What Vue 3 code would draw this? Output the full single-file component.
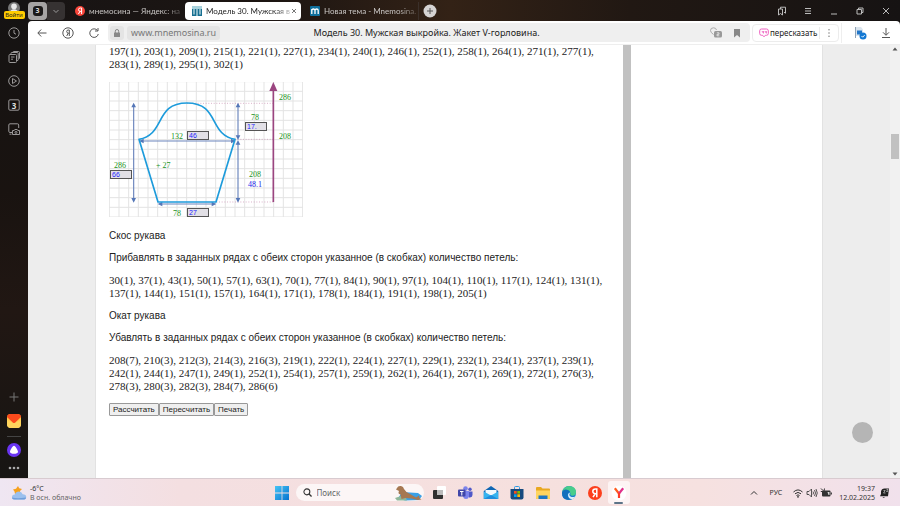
<script setup>
const topRows = '197(1), 203(1), 209(1), 215(1), 221(1), 227(1), 234(1), 240(1), 246(1), 252(1), 258(1), 264(1), 271(1), 277(1), 283(1), 289(1), 295(1), 302(1)'
const bevelRows = '30(1), 37(1), 43(1), 50(1), 57(1), 63(1), 70(1), 77(1), 84(1), 90(1), 97(1), 104(1), 110(1), 117(1), 124(1), 131(1), 137(1), 144(1), 151(1), 157(1), 164(1), 171(1), 178(1), 184(1), 191(1), 198(1), 205(1)'
const capRows = '208(7), 210(3), 212(3), 214(3), 216(3), 219(1), 222(1), 224(1), 227(1), 229(1), 232(1), 234(1), 237(1), 239(1), 242(1), 244(1), 247(1), 249(1), 252(1), 254(1), 257(1), 259(1), 262(1), 264(1), 267(1), 269(1), 272(1), 276(3), 278(3), 280(3), 282(3), 284(7), 286(6)'
const columns = Array.from({ length: 21 }, (_, i) => i * 29 + 1)
const lines = Array.from({ length: 15 }, (_, i) => i * 29 - 1)
</script>

<template>
  <div class="desktop">
    <div class="browser">
      <nav class="rail" aria-label="Боковая панель">
        <button class="login" aria-label="Профиль">
          <svg class="avatar" viewBox="0 0 12 12"><circle cx="6" cy="6" r="6" fill="#777" /><circle cx="6" cy="4.4" r="2.8" fill="#e8e8e8" /><path d="M1.6 11c.6-5 8.200-5 8.800 0z" fill="#e8e8e8" /></svg>
          <span class="login-badge">Войти</span>
        </button>
        <button class="rail-btn" aria-label="История">
          <svg viewBox="0 0 14 14"><circle cx="7" cy="7" r="5.200" /><path d="M7 4v3.200l2 1" /></svg>
        </button>
        <button class="rail-btn" aria-label="Коллекции">
          <svg viewBox="0 0 14 14"><rect x="2" y="4.500" width="7.500" height="8" rx="1" /><path d="M4 4.500V3.200q0-.7.8-.7h5.400q1 0 1 1v6.300q0 .8-1.200.8M6 2.500v-.4q0-.6.7-.6h4.800q1 0 1 1v5.500q0 .8-.8.8M4 7h3.500M4 9.200h2" /></svg>
        </button>
        <button class="rail-btn" aria-label="Видео">
          <svg viewBox="0 0 14 14"><circle cx="7" cy="7" r="5.300" /><path d="M5.500 4.500v5L9.500 7z" /></svg>
        </button>
        <button class="rail-btn" aria-label="Вкладки">
          <svg viewBox="0 0 14 14"><rect x="1.800" y="1.800" width="10.400" height="10.400" rx="1.200" /></svg>
          <span class="rail-count">3</span>
        </button>
        <button class="rail-btn" aria-label="Снимок экрана">
          <svg viewBox="0 0 14 14"><path d="M5 10.500H3q-1.200 0-1.200-1.200V3q0-1.200 1.200-1.200h7.500q1.200 0 1.200 1.200v3M2.500 12.200h2" /><path d="M5.500 8.500h1.700l.6-1h2.400l.6 1h1.700v4h-7z" /><circle cx="9" cy="10.400" r="1" /></svg>
        </button>
        <span class="rail-space"></span>
        <button class="rail-btn dim" aria-label="Добавить">
          <svg viewBox="0 0 14 14"><path d="M7 2.500v9M2.500 7h9" /></svg>
        </button>
        <button class="rail-btn" aria-label="Почта">
          <svg class="app" viewBox="0 0 14 14"><defs><linearGradient id="mailBody" x1="0" y1="0" x2="0" y2="1"><stop offset="0" stop-color="#ffb52e" /><stop offset="1" stop-color="#ffe07a" /></linearGradient></defs><rect width="14" height="14" rx="4" fill="url(#mailBody)" /><path d="M0 6l7 4 7-4v4q0 4-4 4H4q-4 0-4-4z" fill="#ffd45c" /><path d="M3.500 0h7Q14 0 14 3L8 8.700q-1 .8-2 0L0 3Q0 0 3.500 0z" fill="#fb4a1c" /></svg>
        </button>
        <hr class="rail-line">
        <button class="rail-btn" aria-label="Алиса">
          <svg class="app" viewBox="0 0 14 14"><circle cx="7" cy="7" r="7" fill="#6a35f2" /><path d="M7 2.800c1.300 0 4 4.400 4 6 0 1.400-1.800 2-4 2s-4-.6-4-2c0-1.600 2.700-6 4-6z" fill="#fff" /></svg>
        </button>
        <button class="rail-btn more" aria-label="Ещё">
          <svg viewBox="0 0 14 14"><g fill="#aaa" stroke="none"><circle cx="3" cy="7" r="1.300" /><circle cx="7" cy="7" r="1.300" /><circle cx="11" cy="7" r="1.300" /></g></svg>
        </button>
      </nav>

      <div class="window">
        <header class="tabs">
          <button class="group-chip" aria-label="Группа вкладок"><span>3</span></button>
          <button class="group-more" aria-label="Список вкладок"><svg viewBox="0 0 10 10"><path d="M2.500 4L5 6.500 7.500 4" fill="none" stroke="#999" /></svg></button>
          <a class="tab first" href="#">
            <svg viewBox="0 0 10 10"><circle cx="5" cy="5" r="5" fill="#f8453a" /><path d="M6.600 8V2H5.200q-1.700 0-1.700 1.700 0 1.500 1.600 1.700H6.600M5 5.400L3.400 8" fill="none" stroke="#fff" /></svg>
            <span>мнемосина — Яндекс: на</span>
          </a>
          <a class="tab active" href="#">
            <svg viewBox="0 0 10 10"><rect width="10" height="10" fill="#176f91" /><path d="M0 0h10v3H0z" fill="#a9d2dc" /><path d="M2 3v5.500M5 3v7M8 3v5.500" stroke="#cfe6ec" stroke-width="1.200" /></svg>
            <span>Модель 30. Мужская в</span>
            <b aria-hidden="true"><svg viewBox="0 0 8 8"><path d="M2 2l4 4M6 2L2 6" stroke="#777" fill="none" /></svg></b>
          </a>
          <a class="tab last" href="#">
            <svg viewBox="0 0 10 10"><rect width="10" height="10" rx="1" fill="#0e6f9c" /><path d="M1.800 8V3M1.800 4.500q0-1.500 1.600-1.500T5 4.500V8M5 4.500Q5 3 6.600 3t1.600 1.500V8" fill="none" stroke="#fff" stroke-width="1.300" /></svg>
            <span>Новая тема - Mnemosina.</span>
          </a>
          <button class="new-tab" aria-label="Новая вкладка"><svg viewBox="0 0 14 14"><circle cx="7" cy="7" r="6.500" fill="#d6d4d3" /><path d="M7 4v6M4 7h6" stroke="#555" /></svg></button>
          <div class="controls">
            <button aria-label="Закладки"><svg viewBox="0 0 10 10"><path d="M1.500 3h4v6l-2-1.500-2 1.500zM3.500 3V1.200h5v6L7 6.200" /></svg></button>
            <button aria-label="Меню"><svg viewBox="0 0 10 10"><path d="M2 2.500h6M2 5h6M2 7.500h6" /></svg></button>
            <button aria-label="Свернуть"><svg viewBox="0 0 10 10"><path d="M2 8h6" /></svg></button>
            <button aria-label="Окно"><svg viewBox="0 0 10 10"><path d="M2 3.500h4.500V8H2zM3.500 3.500V2H8v4.500H6.500" /></svg></button>
            <button aria-label="Закрыть"><svg viewBox="0 0 10 10"><path d="M2 2l6 6M8 2L2 8" /></svg></button>
          </div>
        </header>

        <div class="toolbar">
          <button class="tool" aria-label="Назад"><svg viewBox="0 0 12 12"><path d="M10.500 6H2M5.200 2.500L1.800 6l3.400 3.500" /></svg></button>
          <button class="tool" aria-label="Яндекс"><svg viewBox="0 0 12 12"><circle cx="6" cy="6" r="5.200" /><path d="M7.300 9V3H6.200Q4.700 3 4.700 4.500T6.300 6.200h1M6.200 6.200L4.700 9" /></svg></button>
          <button class="tool" aria-label="Обновить"><svg viewBox="0 0 12 12"><path d="M9.500 3.500A4.300 4.300 0 1 0 10.300 7M10 1v3H7" /></svg></button>
          <div class="address">
            <span class="lock"><svg viewBox="0 0 10 10"><rect x="2" y="4.500" width="6" height="4.500" rx=".6" fill="#888" /><path d="M3.300 5V3.200q0-1.700 1.700-1.700t1.700 1.700V5" fill="none" stroke="#888" /></svg></span>
            <a class="host" href="#">www.mnemosina.ru</a>
            <span class="title">Модель 30. Мужская выкройка. Жакет V-горловина.</span>
            <svg class="feedback" viewBox="0 0 14 14"><path d="M4.500 8.500Q1.500 6.500 1.500 4.500 1.500 1.800 4.500 1.800 7 1.800 7.500 4" fill="none" stroke="#aaa" /><rect x="5" y="5" width="8" height="6.500" rx="1.500" fill="#999" /><path d="M7.800 6.800h2.200v1.500H8v1.500h2.300" fill="none" stroke="#eee" stroke-width=".8" /></svg>
            <svg class="mark" viewBox="0 0 10 10"><path d="M2 1h6v8.500L5 7 2 9.500z" fill="#888" /></svg>
          </div>
          <div class="retell">
            <button class="retell-btn"><svg viewBox="0 0 10 10"><path d="M2.500 1h5Q9.300 1 9.300 2.800v2.700Q9.300 7.300 7.500 7.300H6.300L5 8.800 3.700 7.300H2.500Q.7 7.300.7 5.500V2.800Q.7 1 2.500 1z" fill="none" stroke="#ee5fc0" /><path d="M3.300 3v1.200h1.200M4.500 3v2.500M6.200 3v1.200h1.200M7.400 3v2.500" fill="none" stroke="#ee5fc0" stroke-width=".8" /></svg>пересказать</button>
            <button class="dots" aria-label="Меню"><svg viewBox="0 0 10 10"><g fill="#888"><circle cx="5" cy="1.800" r=".8" /><circle cx="5" cy="5" r=".8" /><circle cx="5" cy="8.200" r=".8" /></g></svg></button>
          </div>
          <div class="extras">
            <button class="tool wide" aria-label="Расширение"><svg viewBox="0 0 14 14"><path d="M2 1h6l2 2.500V10H2z" fill="#dbe5ee" stroke="none" /><path d="M2.500 1v11" stroke="#8fa2b5" stroke-width="1" /><path d="M4 4.500h5v4H4z" fill="#2377c8" stroke="none" /><circle cx="10" cy="10" r="3.500" fill="#1378d4" stroke="none" /><path d="M8.500 10l1.200 1.200L11.700 9.100" stroke="#fff" stroke-width=".9" /></svg></button>
            <button class="tool wide" aria-label="Загрузки"><svg viewBox="0 0 14 14"><path d="M7 2v7M4 6.300l3 3 3-3M3 11.500h8" /></svg></button>
          </div>
        </div>

        <div class="viewport">
          <div class="gutter left"></div>
          <main class="article">
            <p class="rows">{{ topRows }}</p>
            <div class="pattern">
              <svg class="drawing" viewBox="0 0 194 135" role="img" aria-label="Выкройка рукава">
                <g transform="scale(.33333)">
                  <g stroke="#e3e3e3" stroke-width="3">
                    <line v-for="x in columns" :key="'c' + x" :x1="x" y1="0" :x2="x" y2="405" />
                    <line v-for="y in lines" :key="'l' + y" x1="0" :y1="y" x2="582" :y2="y" />
                  </g>
                  <g stroke="#c98bb0" stroke-width="2" stroke-dasharray="3 5">
                    <path d="M234 64H493M378 172H493M322 360H493" />
                  </g>
                  <g stroke="#6c86bd" stroke-width="3.500">
                    <path d="M74 68V356M387 68V168M387 180V356M96 177H374M152 366H316" />
                  </g>
                  <g fill="#5577b8">
                    <path d="M74 62l-7 14h14zM74 362l-7-14h14zM387 62l-7 14h14zM387 174l-7-14h14zM387 174l-7 14h14zM387 362l-7-14h14zM90 177l14-7v14zM380 177l-14-7v14zM146 366l14-7v14zM322 366l-14-7v14z" />
                  </g>
                  <path d="M90 172C170 158 136 63 234 63S298 158 378 172L321 360H147z" fill="none" stroke="#1d9bdb" stroke-width="5" stroke-linejoin="round" />
                  <path d="M493 360V20" stroke="#9b4580" stroke-width="5" />
                  <path d="M493 0l-12 27h24z" fill="#9b4580" />
                </g>
                <g class="stitches">
                  <text x="170" y="18">286</text>
                  <text x="170" y="57">208</text>
                  <text x="142" y="38">78</text>
                  <text x="62" y="57">132</text>
                  <text x="5" y="86">286</text>
                  <text x="47" y="86">+ 27</text>
                  <text x="140" y="95">208</text>
                  <text class="size" x="139" y="105">48.1</text>
                  <text x="64" y="134">78</text>
                </g>
              </svg>
              <input class="measure cap" aria-label="Высота оката" value="17.">
              <input class="measure chest" aria-label="Ширина рукава" value="46">
              <input class="measure length" aria-label="Длина рукава" value="66">
              <input class="measure wrist" aria-label="Ширина манжеты" value="27">
            </div>
            <h2>Скос рукава</h2>
            <p class="note">Прибавлять в заданных рядах с обеих сторон указанное (в скобках) количество петель:</p>
            <p class="rows">{{ bevelRows }}</p>
            <h2>Окат рукава</h2>
            <p class="note">Убавлять в заданных рядах с обеих сторон указанное (в скобках) количество петель:</p>
            <p class="rows">{{ capRows }}</p>
            <div class="actions">
              <button>Рассчитать</button><button>Пересчитать</button><button>Печать</button>
            </div>
          </main>
          <div class="divider"></div>
          <div class="blank"></div>
          <div class="gutter right"><button class="to-top" aria-label="Наверх"></button></div>
          <div class="scroll" aria-hidden="true">
            <svg viewBox="0 0 10 8"><path d="M5 2.500L7.500 5.500h-5z" fill="#555" /></svg>
            <span class="before"></span><span class="thumb"></span><span class="after"></span>
            <svg viewBox="0 0 10 8"><path d="M5 5.500L7.500 2.500h-5z" fill="#555" /></svg>
          </div>
        </div>
      </div>
    </div>

    <footer class="taskbar">
      <div class="weather">
        <svg viewBox="0 0 16 16"><path d="M7 1l1.200 2.200L11 4 9 6l.5 3H4L3.500 6.500 2 4.500l3-.7z" fill="#f6a11c" /><path d="M4 14.500q-3 0-3-2.500t2.800-2.600Q4.800 6.500 8 6.500q2.700 0 3.700 2.700 3.500 0 3.500 2.700T12 14.500z" fill="#9cc0ee" /><path d="M4 14.500q-3 0-3-2 5 1.500 14 0 0 2-3 2z" fill="#6f9edb" /></svg>
        <div><p>-6°C</p><p class="soft">В осн. облачно</p></div>
      </div>
      <div class="dock">
        <button class="start" aria-label="Пуск"><svg viewBox="0 0 14 14"><defs><linearGradient id="win" x1="0" y1="0" x2="1" y2="1"><stop offset="0" stop-color="#45c4f5" /><stop offset="1" stop-color="#0672cf" /></linearGradient></defs><path d="M0 0h6.600v6.600H0zM7.400 0H14v6.600H7.400zM0 7.400h6.600V14H0zM7.400 7.400H14V14H7.400z" fill="url(#win)" /></svg></button>
        <label class="search">
          <svg class="glass" viewBox="0 0 10 10"><circle cx="4.300" cy="4.300" r="3.300" fill="none" stroke="#333" stroke-width="1.200" /><path d="M6.700 6.700L9.500 9.500" stroke="#333" stroke-width="1.400" /></svg>
          <input type="text" placeholder="Поиск" aria-label="Поиск">
          <svg class="seal" viewBox="0 0 28 16"><path d="M8 7l16 1 4 3-3 4-14 .5-7-2z" fill="#3ba0e6" /><path d="M1 13l6-2 5 2 1 2.500H3z" fill="#8fb79a" /><path d="M3 3q1-2.500 4-2 2.500.5 3 3 1.500 3 6 5l6 3.500 3-2 .5 2.500 2 1.500-4 .5-6-1.500-6-.5-4 1-1-4.500Q3.500 9 5 6L2 4.500z" fill="#a67852" /></svg>
        </label>
        <button aria-label="Рабочие столы"><svg viewBox="0 0 16 16"><rect x="6" y="1" width="9" height="9" rx="1" fill="#fff" /><rect x="2" y="5" width="10" height="9" rx="1" fill="#303030" /><rect x="6" y="5" width="6" height="5" fill="#bbb" /></svg></button>
        <button aria-label="Teams"><svg viewBox="0 0 16 16"><circle cx="8.500" cy="3.500" r="2.300" fill="#7b83eb" /><circle cx="13" cy="4.200" r="1.700" fill="#5059c9" /><path d="M6 6h6v5.500Q11.500 14 9 14t-3-2.500z" fill="#7b83eb" /><path d="M12 6.500h3.500V10q0 2-2.500 2.500h-1z" fill="#5059c9" /><rect x="1" y="4.500" width="7.500" height="7" rx="1" fill="#4046a8" /><path d="M3 6.500h3.500M4.800 6.500v4" stroke="#fff" /></svg></button>
        <button aria-label="Почта"><svg viewBox="0 0 16 16"><path d="M.8 6L8 1l7.200 5v8H.8z" fill="#1067b4" /><path d="M2.500 5h11v5L8 12l-5.500-2z" fill="#f3f8fc" /><path d="M.8 6.500L8 10.500l7.200-4V14H.8z" fill="#36b3ef" /><path d="M.8 14L8 10l7.200 4z" fill="#1f8ddd" /></svg></button>
        <button aria-label="Магазин"><svg viewBox="0 0 16 16"><path d="M5.500 4V2.500q0-1 1-1h3q1 0 1 1V4" fill="none" stroke="#2d9be4" /><path d="M1.500 4h13v8.500q0 2-2 2h-9q-2 0-2-2z" fill="#174a7e" /><path d="M5 6h2.700v2.700H5z" fill="#f25022" /><path d="M8.300 6H11v2.700H8.300z" fill="#7fba00" /><path d="M5 9.300h2.700V12H5z" fill="#00a4ef" /><path d="M8.300 9.300H11V12H8.300z" fill="#ffb900" /></svg></button>
        <button aria-label="Проводник"><svg viewBox="0 0 16 16"><path d="M1 3q0-1 1-1h4l1.500 1.500H14q1 0 1 1V13q0 1-1 1H2q-1 0-1-1z" fill="#e9a820" /><path d="M1 5.500h14V13q0 1-1 1H2q-1 0-1-1z" fill="#ffd45e" /><path d="M3.500 10.500h9V14h-9z" fill="#1d76c4" /></svg></button>
        <button aria-label="Edge"><svg viewBox="0 0 16 16"><circle cx="8" cy="8" r="7" fill="#1681cf" /><path d="M2 4.500Q4.500 1 8 1q7 0 7 6.500 0 3-3.500 3.200-3 0-2-2.400Q9 5.500 5.500 5 3.300 4.900 1.300 6.500z" fill="#49cd8b" /><path d="M1 8q.5-3.500 4-3.500 3 0 4 2.500-3 .5-2.500 3.500T11 14Q1 17 1 8z" fill="#1270bd" /><path d="M9.300 7.500q-2 2.500.2 4 2 1 4.800 0-.8 1.800-2.800 2.700-3.500 0-4.300-3T9.300 7.500z" fill="#d9effa" /></svg></button>
        <button aria-label="Яндекс"><svg viewBox="0 0 16 16"><circle cx="8" cy="8" r="7" fill="#fc3f1d" /><path d="M9.800 12.200V4H8.500Q5.800 4 5.800 6.300T8.500 8.700h1.300M8.300 8.700L6 12.200" fill="none" stroke="#fff" stroke-width="1.500" /></svg></button>
        <button class="current" aria-label="Яндекс Браузер"><svg viewBox="0 0 16 16"><circle cx="8" cy="8" r="7.500" fill="#fff" /><path d="M3.800 3.300L8 8.500" stroke="#ff5a1f" stroke-width="2.200" /><path d="M12.200 3.300L8 8.500" stroke="#e0308a" stroke-width="2.200" /><path d="M8 7.800V13" stroke="#ff3c28" stroke-width="2.200" /></svg></button>
      </div>
      <div class="tray">
        <button class="caret" aria-label="Скрытые значки"><svg viewBox="0 0 10 10"><path d="M2 6.500L5 3.500l3 3" fill="none" stroke="#333" /></svg></button>
        <span class="lang">РУС</span>
        <svg viewBox="0 0 12 12"><path d="M1.500 5Q6 .8 10.500 5M3 6.800Q6 4 9 6.800M4.500 8.500q1.500-1.300 3 0" fill="none" stroke="#333" /><circle cx="6" cy="9.800" r=".9" fill="#333" /></svg>
        <svg viewBox="0 0 12 12"><path d="M1 4.500h2L5.500 2v8L3 7.500H1zM7 4.500q1 1.500 0 3M8.500 3q2 3 0 6M10 2q2.500 4 0 8" fill="none" stroke="#444" stroke-width=".9" /></svg>
        <svg viewBox="0 0 12 12"><rect x="2" y="3.500" width="8.500" height="6" rx="1" fill="#333" /><path d="M11.300 5.500v2" stroke="#333" stroke-width="1.200" /><path d="M1 1.500l2 2M4.500 1.500L4 4M.8 4.500h2" stroke="#333" /><path d="M7.500 5h2v3h-1z" fill="#ddd" /></svg>
        <div class="clock"><p>19:37</p><p>12.02.2025</p></div>
        <svg class="bell" viewBox="0 0 12 12"><path d="M2 9.200L3 7V4.500Q3.500 1.500 6.500 1.500H11L10 9.200z" fill="#222" /><path d="M4.500 10q1 1.500 2.500 0z" fill="#222" /><path d="M5.500 3.500h1.700L5.500 6h2M8.500 2.500H10L8.500 4.500H10" fill="none" stroke="#ddd" stroke-width=".6" /></svg>
      </div>
    </footer>
  </div>
</template>

<style>
body { background: #ededed; overflow: hidden; }
</style>

<style scoped>
* { box-sizing: border-box; }
p, h2 { margin: 0; font-weight: 400; }
button { padding: 0; border: 0; background: none; font: inherit; color: inherit; }
a { color: inherit; text-decoration: none; }
svg { display: block; flex: none; }
.desktop { display: flex; flex-direction: column; height: 100vh; font-family: "Noto Sans", "Open Sans", sans-serif; }
.browser { display: flex; flex: 1; min-height: 0; background: linear-gradient(90deg, #171414, #1c1512 30%, #332216 50%, #211813 70%, #161313); }

.rail { display: flex; flex-direction: column; align-items: center; width: 28px; padding-bottom: 4px; background: linear-gradient(#151313, #191310 40%, #211713 65%, #171513); }
.login { display: flex; flex-direction: column; align-items: center; height: 21px; padding-top: 2px; }
.avatar { width: 12px; height: 12px; }
.login-badge { position: relative; margin-top: -3px; width: 21px; height: 8px; border-radius: 2px; background: #ffcc00; color: #222; font-size: 6px; line-height: 8px; text-align: center; }
.rail-btn { position: relative; display: flex; align-items: center; justify-content: center; width: 28px; height: 24px; }
.rail-btn svg { width: 14px; height: 14px; fill: none; stroke: #9a9898; stroke-width: 1; }
.rail-btn svg.app { stroke: none; }
.rail-btn.dim svg { stroke: #777; }
.rail-btn.more { height: 12px; }
.rail-count { position: absolute; color: #ddd; font-size: 8px; font-weight: 700; }
.rail-space { flex: 1; }
.rail-line { width: 14px; height: 1px; margin: 3px 0 1px; border: 0; background: #444; }

.window { display: flex; flex-direction: column; flex: 1; min-width: 0; }
.tabs { display: flex; align-items: center; height: 21px; color: #c9c6c4; font-size: 8px; }
.group-chip { display: flex; align-items: center; justify-content: center; width: 19px; height: 18px; border-radius: 4px; background: #a6a4a4; }
.group-chip span { width: 10px; height: 10px; border-radius: 3px; background: #1c1a1a; color: #ddd; font-size: 7px; line-height: 10px; font-weight: 700; }
.group-more { display: flex; align-items: center; justify-content: center; width: 18px; height: 18px; border-radius: 0 4px 4px 0; background: #363232; }
.group-more svg { width: 10px; }
.tab { display: flex; align-items: center; gap: 4px; height: 18px; padding: 0 2px 0 7px; font-family: Lato, "Noto Sans", sans-serif; }
.tab > svg { width: 10px; height: 10px; }
.tab span { white-space: nowrap; mask-image: linear-gradient(90deg, #000 80%, rgba(0, 0, 0, 0.3)); }
.tab b { margin-left: -4px; }
.tab b svg { width: 8px; height: 8px; }
.tab.first { width: 117px; margin-left: 3px; }
.tab.active { width: 116px; border-radius: 4px; background: #fff; color: #222; }
.tab.last { width: 118px; padding-left: 9px; border-right: 1px solid #3b302a; }
.new-tab { margin-left: 4px; }
.new-tab svg { width: 14px; height: 14px; }
.controls { display: flex; margin-left: auto; padding-right: 1px; }
.controls button { display: flex; justify-content: center; width: 26px; }
.controls svg { width: 10px; height: 10px; fill: none; stroke: #bbb; stroke-width: 1; }

.toolbar { display: flex; align-items: center; height: 24px; padding-left: 1px; border-radius: 4px 4px 0 0; background: #fff; border-bottom: 1px solid #eee; }
.tool { display: flex; align-items: center; justify-content: center; width: 26px; height: 20px; }
.tool svg { width: 12px; height: 12px; fill: none; stroke: #555; stroke-width: 1; }
.tool.wide svg { width: 14px; height: 14px; }
.address { display: flex; align-items: center; flex: 1; height: 19px; margin-left: 1px; padding: 0 8px 0 2px; border-radius: 4px; background: #efefef; }
.lock { display: flex; align-items: center; justify-content: center; width: 14px; height: 14px; border-radius: 3px; background: #e4e4e4; }
.lock svg { width: 10px; height: 10px; }
.host { margin-left: 3px; padding: 0 4px; border-radius: 3px; background: #e4e4e4; color: #777; font-size: 9px; line-height: 14px; }
.title { flex: 1; padding-right: 76px; color: #222; font-size: 9px; text-align: center; white-space: nowrap; }
.feedback { width: 14px; height: 14px; }
.mark { width: 10px; height: 10px; margin-left: 9px; }
.retell { display: flex; align-items: center; width: 87px; height: 18px; margin-left: 2px; border: 1px solid #ececec; border-radius: 4px; }
.retell-btn { display: flex; align-items: center; gap: 1px; flex: 1; height: 12px; padding-left: 6px; border-right: 1px solid #ececec; color: #222; font-size: 8px; }
.retell-btn svg, .dots svg { width: 10px; height: 10px; }
.dots { display: flex; justify-content: center; width: 18px; }
.extras { display: flex; margin-left: 2px; padding-left: 5px; padding-right: 1px; border-left: 1px solid #eee; }

.viewport { display: grid; grid-template-columns: 68fr 527fr 8px 191fr 68fr 10px; flex: 1; min-height: 0; overflow: hidden; background: #fff; }
.gutter { background: #ededed; }
.gutter.left { border-right: 1px solid #e2e2e2; }
.gutter.right { display: flex; align-items: flex-end; justify-content: center; padding: 0 0 35px 12px; border-left: 1px solid #e2e2e2; }
.to-top { width: 21px; height: 21px; border-radius: 50%; background: #b5b5b5; }
.divider { background: #c1c1c1; }
.scroll { display: flex; flex-direction: column; align-items: center; background: #f1f1f1; }
.scroll svg { width: 10px; height: 8px; }
.before { flex: 81; }
.thumb { flex: 24; width: 8px; background: #c1c1c1; }
.after { flex: 310; }

.article { padding: 0 8px 0 13px; color: #222; font-family: "Liberation Sans", Arial, sans-serif; font-size: 10px; line-height: 13px; }
.rows { font-family: "Liberation Serif", "Times New Roman", serif; font-size: 11px; }
.pattern { position: relative; width: 194px; margin: 11px 0 12px; }
.drawing { width: 194px; height: 135px; }
.stitches { fill: #1a931a; font-family: "Liberation Serif", serif; font-size: 8px; }
.stitches .size { fill: #2222e8; }
.measure { position: absolute; width: 22px; height: 9px; padding: 0 1px; border: 1px solid #555; border-radius: 0; background: #e2e0e6; color: #2222ff; font: 7px/7px "Liberation Sans", sans-serif; }
.measure.cap { left: 136px; top: 40px; }
.measure.chest { left: 78px; top: 49px; }
.measure.length { left: 1px; top: 88px; }
.measure.wrist { left: 78px; top: 126px; }
h2 { font-size: 10px; }
.note { margin: 9px 0 10px; }
.rows + h2 { margin-top: 9px; }
.actions { display: flex; margin-top: 10px; }
.actions button { height: 13px; padding: 0 3px; border: 1px solid #999; border-radius: 1px; background: #efefef; font-size: 8px; line-height: 11px; }

.taskbar { display: grid; grid-template-columns: 1fr auto 1fr; align-items: center; height: 28px; border-top: 1px solid #d8cbd0; background: linear-gradient(90deg, #efe6f2, #f4dfe1 20%, #f6e0de 60%, #f6e1e0 78%, #f1e1ec); color: #333; font-size: 7px; }
.weather { display: flex; align-items: center; gap: 3px; padding-left: 11px; line-height: 9px; }
.weather svg { width: 16px; height: 16px; }
.weather .soft { color: #666; }
.dock { display: flex; align-items: center; padding-right: 3px; }
.dock button { display: flex; align-items: center; justify-content: center; width: 26px; height: 23px; }
.dock button svg { width: 16px; height: 16px; }
.dock .start { width: 28px; }
.dock .start svg { width: 14px; height: 14px; }
.search { display: flex; align-items: center; width: 128px; height: 17px; margin-right: 2px; padding: 0 2px 0 7px; border-radius: 9px; background: #fcf6f6; }
.glass { width: 9px; height: 9px; }
.search input { flex: 1; min-width: 0; margin-left: 5px; padding: 0; border: 0; background: none; font: 8px "Noto Sans", sans-serif; }
.search input::placeholder { color: #666; opacity: 1; }
.seal { width: 28px; height: 16px; }
.dock .current { position: relative; width: 22px; border-radius: 3px; background: #fdf4f4; }
.current::after { content: ""; position: absolute; bottom: 0; width: 9px; height: 2px; border-radius: 1px; background: #5d7488; }
.tray { display: flex; align-items: center; justify-content: flex-end; gap: 2px; padding-right: 10px; }
.tray svg { width: 12px; height: 12px; }
.caret svg { width: 10px; height: 10px; }
.lang { margin: 0 8px 0 9px; }
.clock { margin: 0 1px 0 5px; line-height: 9px; text-align: right; }
</style>
